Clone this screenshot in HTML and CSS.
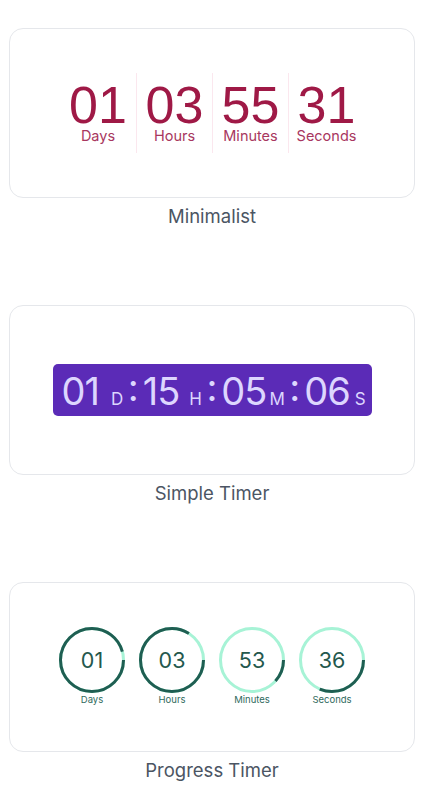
FILE: index.html
```html
<!DOCTYPE html>
<html lang="en">
<head>
  <meta charset="utf-8" />
  <meta name="viewport" content="width=device-width, initial-scale=1" />
  <title>Countdown Timers</title>
  <link rel="stylesheet" href="styles.css">
</head>
<body>
  <div id="timers">
    <!-- Minimalist -->
    <div class="timer-block">
      <div class="timer-card">
        <div class="minimal">
          <div class="minimal-unit">
            <span class="minimal-value">01</span>
            <span class="minimal-label">Days</span>
          </div>
          <div class="minimal-unit">
            <span class="minimal-value">03</span>
            <span class="minimal-label">Hours</span>
          </div>
          <div class="minimal-unit">
            <span class="minimal-value">55</span>
            <span class="minimal-label">Minutes</span>
          </div>
          <div class="minimal-unit">
            <span class="minimal-value">31</span>
            <span class="minimal-label">Seconds</span>
          </div>
        </div>
      </div>
      <p class="timer-caption">Minimalist</p>
    </div>

    <!-- Simple Timer -->
    <div class="timer-block">
      <div class="timer-card">
        <div class="simple">
          <span class="simple-num">01</span><span class="simple-unit unit-d">D</span>
          <span class="simple-colon">:</span>
          <span class="simple-num">15</span><span class="simple-unit unit-h">H</span>
          <span class="simple-colon">:</span>
          <span class="simple-num">05</span><span class="simple-unit unit-m">M</span>
          <span class="simple-colon">:</span>
          <span class="simple-num">06</span><span class="simple-unit unit-s">S</span>
        </div>
      </div>
      <p class="timer-caption">Simple Timer</p>
    </div>

    <!-- Progress Timer -->
    <div class="timer-block">
      <div class="timer-card">
        <div class="progress">
          <div class="progress-unit">
            <div class="ring">
              <svg viewBox="0 0 66 66" width="66" height="66">
                <circle class="ring-track" cx="33" cy="33" r="31.5"></circle>
                <circle class="ring-bar" cx="33" cy="33" r="31.5" stroke-dasharray="189 198"></circle>
              </svg>
              <span class="ring-value">01</span>
            </div>
            <span class="ring-label">Days</span>
          </div>
          <div class="progress-unit">
            <div class="ring">
              <svg viewBox="0 0 66 66" width="66" height="66">
                <circle class="ring-track" cx="33" cy="33" r="31.5"></circle>
                <circle class="ring-bar" cx="33" cy="33" r="31.5" stroke-dasharray="166 198"></circle>
              </svg>
              <span class="ring-value">03</span>
            </div>
            <span class="ring-label">Hours</span>
          </div>
          <div class="progress-unit">
            <div class="ring">
              <svg viewBox="0 0 66 66" width="66" height="66">
                <circle class="ring-track" cx="33" cy="33" r="31.5"></circle>
                <circle class="ring-bar" cx="33" cy="33" r="31.5" stroke-dasharray="23 198"></circle>
              </svg>
              <span class="ring-value">53</span>
            </div>
            <span class="ring-label">Minutes</span>
          </div>
          <div class="progress-unit">
            <div class="ring">
              <svg viewBox="0 0 66 66" width="66" height="66">
                <circle class="ring-track" cx="33" cy="33" r="31.5"></circle>
                <circle class="ring-bar" cx="33" cy="33" r="31.5" stroke-dasharray="62 198"></circle>
              </svg>
              <span class="ring-value">36</span>
            </div>
            <span class="ring-label">Seconds</span>
          </div>
        </div>
      </div>
      <p class="timer-caption">Progress Timer</p>
    </div>
  </div>
</body>
</html>
```

FILE: styles.css
```css
* {
  margin: 0;
  padding: 0;
  box-sizing: border-box;
}

body {
  background-color: #fff;
  font-family: Inter, "Noto Sans", sans-serif;
}

#timers {
  padding: 28px 21px 0 9px;
}

.timer-block {
  margin-bottom: 76px;
}

.timer-block:last-child {
  margin-bottom: 0;
}

.timer-card {
  height: 170px;
  border: 1px solid #e5e7eb;
  border-radius: 14px;
  display: flex;
  justify-content: center;
  align-items: center;
}

.timer-caption {
  margin-top: 5px;
  text-align: center;
  font-size: 18.5px;
  line-height: 26px;
  color: #4b5563;
}

/* Minimalist */
.minimal {
  display: flex;
}

.minimal-unit {
  width: 76px;
  height: 80px;
  padding-top: 10px;
  display: flex;
  flex-direction: column;
  align-items: center;
}

.minimal-unit + .minimal-unit {
  border-left: 1px solid #fbe7ee;
}

.minimal-value {
  font-family: "Liberation Sans", Arial, sans-serif;
  font-size: 52px;
  line-height: 44px;
  color: #9f1946;
}

.minimal-label {
  font-size: 14.5px;
  line-height: 17px;
  color: #a83760;
}

/* Simple timer */
.simple {
  width: 319px;
  height: 52px;
  padding: 0 9px;
  border-radius: 5px;
  background-color: #5b2bb7;
  color: #ddd6fe;
  display: flex;
  align-items: baseline;
  padding-top: 7px;
}

.simple-num {
  font-size: 38px;
  line-height: 40px;
  letter-spacing: -1px;
}

.simple-unit {
  font-size: 17px;
  letter-spacing: 0.5px;
}

.unit-d {
  margin-left: 12px;
}

.unit-h {
  margin-left: 10px;
}

.unit-m {
  margin-left: 3px;
}

.unit-s {
  margin-left: 5px;
}

.simple-colon {
  font-size: 38px;
  line-height: 40px;
  margin: 0 4px;
  position: relative;
  top: -4px;
}

/* Progress timer */
.progress {
  display: flex;
  gap: 14px;
  padding-bottom: 1px;
}

.progress-unit {
  width: 66px;
  display: flex;
  flex-direction: column;
  align-items: center;
}

.ring {
  position: relative;
  width: 66px;
  height: 66px;
}

.ring svg {
  display: block;
}

.ring-track {
  fill: none;
  stroke: #a7f3d6;
  stroke-width: 3;
}

.ring-bar {
  fill: none;
  stroke: #1f5e52;
  stroke-width: 3;
}

.ring-value {
  position: absolute;
  inset: 0;
  display: flex;
  justify-content: center;
  align-items: center;
  font-size: 21.5px;
  color: #24584d;
}

.ring-label {
  margin-top: 1px;
  font-size: 9.5px;
  line-height: 12px;
  color: #2f6a5d;
}
```
